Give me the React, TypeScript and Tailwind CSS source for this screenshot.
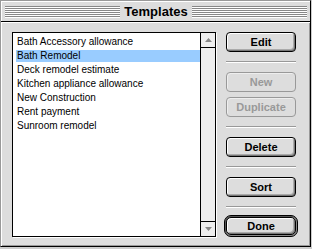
import React from 'react';

const items = [
  'Bath Accessory allowance',
  'Bath Remodel',
  'Deck remodel estimate',
  'Kitchen appliance allowance',
  'New Construction',
  'Rent payment',
  'Sunroom remodel',
];

const btnFont = { fontFamily: '"Liberation Sans", Arial, sans-serif' };

// Platinum-style push button
const MacButton: React.FC<{ label: string; disabled?: boolean; className?: string }> = ({
  label,
  disabled,
  className = '',
}) => (
  <div
    className={`h-[20px] w-[70px] rounded-[4px] border flex items-center justify-center text-[11px] font-bold leading-none bg-[#dddddd] ${
      disabled
        ? 'border-[#999999] text-[#999999] shadow-[inset_1px_1px_0_#eeeeee]'
        : 'border-black text-black shadow-[inset_1px_1px_0_#ffffff,inset_-1px_-1px_0_#777777,inset_-2px_-2px_0_#aaaaaa]'
    } ${className}`}
    style={btnFont}
  >
    {label}
  </div>
);

const Separator: React.FC = () => (
  <div className="w-[70px] h-[2px] border-t border-[#999999] border-b border-b-white" />
);

const App: React.FC = () => {
  const selected = 1;

  return (
    <div className="w-[312px] h-[249px] bg-[#cccccc]">
      <div className="w-[311px] h-[247px] flex flex-col bg-[#dddddd] border-t border-l border-[#999999] border-r border-b border-r-black border-b-black">
        {/* title bar */}
        <div className="h-[21px] flex items-center pl-[4px] pr-[3px] border-b border-black shadow-[inset_1px_1px_0_#ffffff]">
          <div className="flex-1 h-[12px] mt-[1px] bg-[repeating-linear-gradient(to_bottom,#888888_0_1px,#ffffff_1px_2px)]" />
          <div
            className="px-[4px] text-[13px] font-bold text-black leading-none"
            style={{ fontFamily: '"Liberation Sans", Arial, sans-serif' }}
          >
            Templates
          </div>
          <div className="flex-1 h-[12px] mt-[1px] bg-[repeating-linear-gradient(to_bottom,#888888_0_1px,#ffffff_1px_2px)]" />
        </div>

        {/* content */}
        <div className="flex-1 flex pl-[11px] pt-[10px] gap-[10px] shadow-[inset_1px_1px_0_#ffffff,inset_-1px_-1px_0_#999999]">
          {/* list box */}
          <div className="w-[204px] h-[205px] border border-black bg-white flex shadow-[1px_1px_0_#ffffff]">
            <div className="flex-1 pt-[3px] pl-[3px]">
              {items.map((item, i) => (
                <div key={item} className="h-[14px]">
                  <div
                    className={`h-[12px] pl-px text-[10px] leading-[12px] text-black whitespace-nowrap ${
                      i === selected ? 'bg-[#99ccff]' : ''
                    }`}
                    style={{ fontFamily: '"Liberation Sans", Arial, sans-serif' }}
                  >
                    {item}
                  </div>
                </div>
              ))}
            </div>
            {/* scrollbar */}
            <div className="w-[15px] border-l border-black bg-[#eeeeee] flex flex-col justify-between">
              <div className="h-[15px] border-b border-black flex items-center justify-center">
                <svg width="7" height="4" viewBox="0 0 7 4">
                  <path d="M3.5 0 L7 4 L0 4 Z" fill="#888888" />
                </svg>
              </div>
              <div className="h-[15px] border-t border-black flex items-center justify-center">
                <svg width="7" height="4" viewBox="0 0 7 4">
                  <path d="M0 0 L7 0 L3.5 4 Z" fill="#888888" />
                </svg>
              </div>
            </div>
          </div>

          {/* buttons */}
          <div className="flex flex-col">
            <MacButton label="Edit" />
            <div className="mt-[9px]">
              <Separator />
            </div>
            <MacButton label="New" disabled className="mt-[9px]" />
            <MacButton label="Duplicate" disabled className="mt-[5px]" />
            <div className="mt-[9px]">
              <Separator />
            </div>
            <MacButton label="Delete" className="mt-[9px]" />
            <div className="mt-[9px]">
              <Separator />
            </div>
            <MacButton label="Sort" className="mt-[9px]" />
            <div className="mt-[9px]">
              <Separator />
            </div>
            <div className="mt-[7px] ml-[-2px] w-[74px] h-[22px] rounded-[7px] border border-black bg-[#888888] p-[1px] shadow-[inset_1px_1px_0_#555555]">
              <div
                className="h-full w-full rounded-[5px] border border-black bg-[#dddddd] flex items-center justify-center text-[11px] font-bold leading-none text-black shadow-[inset_1px_1px_0_#ffffff,inset_-1px_-1px_0_#777777,inset_-2px_-2px_0_#aaaaaa]"
                style={btnFont}
              >
                Done
              </div>
            </div>
          </div>
        </div>
      </div>
    </div>
  );
};

export default App;
